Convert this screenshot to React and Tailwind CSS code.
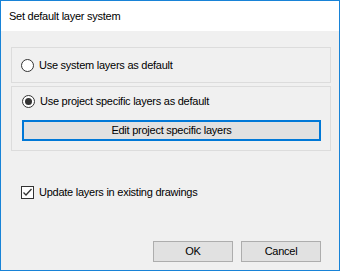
import React from "react";

const font = { fontFamily: '"Liberation Sans", Arial, sans-serif' };

function Radio({ checked, label }) {
  return (
    <label className="flex items-center gap-[5px] text-[11px] tracking-[-0.25px] text-black leading-none">
      <span className="w-[13px] h-[13px] rounded-full border border-[#333] bg-white flex items-center justify-center">
        {checked && <span className="w-[7px] h-[7px] rounded-full bg-[#333]" />}
      </span>
      <span>{label}</span>
    </label>
  );
}

function Button({ children, focused, className = "" }) {
  return (
    <button
      className={`h-[21px] bg-[#e1e1e1] text-[11px] tracking-[-0.25px] text-black flex items-center justify-center ${
        focused ? "border-2 border-[#0078d7]" : "border border-[#adadad]"
      } ${className}`}
    >
      {children}
    </button>
  );
}

export default function App() {
  return (
    <div className="w-[345px] h-[274px] bg-white" style={font}>
      <div className="w-[340px] h-[271px] border border-[#1883d7] flex flex-col">
        <div className="h-[30px] bg-white flex items-center pl-[8px] text-[11px] tracking-[-0.25px] text-black">
          Set default layer system
        </div>
        <div className="flex-1 bg-[#f0f0f0] flex flex-col pl-[10px] pt-[16px]">
          <div className="w-[320px] h-[36px] border border-[#dcdcdc] flex items-center pl-[9px]">
            <Radio label="Use system layers as default" />
          </div>
          <div className="w-[320px] h-[65px] mt-[3px] border border-[#dcdcdc] flex flex-col pl-[10px] pt-[8px]">
            <Radio checked label="Use project specific layers as default" />
            <Button focused className="w-[299px] mt-[12px]">
              Edit project specific layers
            </Button>
          </div>
          <label className="flex items-center gap-[5px] text-[11px] tracking-[-0.25px] text-black leading-none mt-[35px] pl-[10px]">
            <span className="w-[13px] h-[13px] border border-[#333] bg-white flex items-center justify-center">
              <svg width="11" height="11" viewBox="0 0 11 11">
                <path d="M1.5 5.5 L4 8 L9.5 2" fill="none" stroke="#333" strokeWidth="1.3" />
              </svg>
            </span>
            <span>Update layers in existing drawings</span>
          </label>
          <div className="flex gap-[8px] ml-[142px] mt-[42px]">
            <Button className="w-[80px]">OK</Button>
            <Button className="w-[80px]">Cancel</Button>
          </div>
        </div>
      </div>
    </div>
  );
}
